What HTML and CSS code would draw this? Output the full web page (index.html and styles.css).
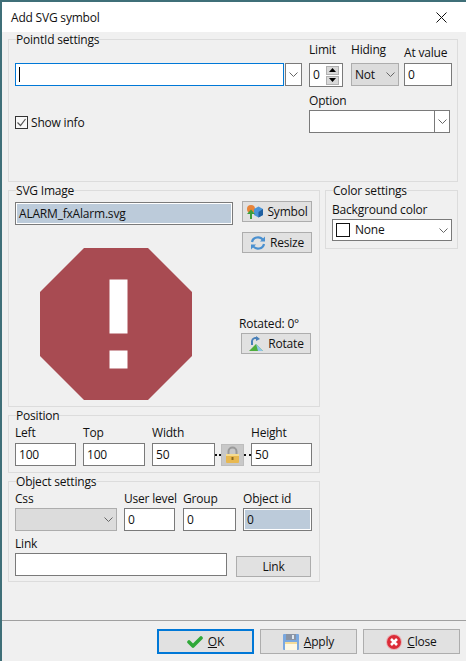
FILE: index.html
```html
<!doctype html>
<html>
<head>
<meta charset="utf-8">
<title>Add SVG symbol</title>
<link rel="stylesheet" href="styles.css">
</head>
<body>
<div class="dialog">

<div class="titlebar">
<span>Add SVG symbol</span>
<svg class="close-x" width="11" height="11" viewBox="0 0 11 11"><path d="M.5.5l10 10M10.500.5l-10 10" stroke="#111" fill="none"/></svg>
</div>

<div class="content">

<fieldset class="panel point-panel">
<legend>PointId settings</legend>
<div class="point-grid">
<div class="point-left">
<div class="point-combo">
<div class="box focus"><i class="caret"></i></div>
<div class="box drop"><svg class="chev" width="9" height="5" viewBox="0 0 9 5"><path d="M.5.500l4 4 4-4"/></svg></div>
</div>
<label class="check-row">
<span class="check"><svg width="11" height="11" viewBox="0 0 11 11"><path d="M1.500 5.500l3 3 5-6.500" stroke="#555" fill="none" stroke-width="1.200"/></svg></span>
Show info
</label>
</div>
<div class="point-right">
<div class="point-top">
<div class="field w-limit">
<span class="lbl">Limit</span>
<div class="box spin">0
<span class="spin-btns">
<b><svg width="7" height="4" viewBox="0 0 7 4"><path d="M3.500 0L7 4H0z"/></svg></b>
<b><svg width="7" height="4" viewBox="0 0 7 4"><path d="M0 0h7L3.500 4z"/></svg></b>
</span>
</div>
</div>
<div class="field w-hiding">
<span class="lbl">Hiding</span>
<div class="box disabled">Not<svg class="chev" width="9" height="5" viewBox="0 0 9 5"><path d="M.5.500l4 4 4-4"/></svg></div>
</div>
<div class="field w-atvalue">
<span class="lbl low">At value</span>
<div class="box">0</div>
</div>
</div>
<div class="field w-option">
<span class="lbl">Option</span>
<div class="box option-box"><span class="option-drop"><svg class="chev" width="9" height="5" viewBox="0 0 9 5"><path d="M.5.500l4 4 4-4"/></svg></span></div>
</div>
</div>
</div>
</fieldset>

<div class="middle">
<div class="left-col">

<fieldset class="panel image-panel">
<legend>SVG Image</legend>
<div class="image-grid">
<div class="image-left">
<div class="box readonly file-box">ALARM_fxAlarm.svg</div>
<svg class="alarm" width="152" height="152" viewBox="0 0 152 152">
<path d="M44 0H108L152 44V108L108 152H44L0 108V44z" fill="#a84b52"/>
<rect x="69.500" y="31.500" width="18" height="54" fill="#fff"/>
<rect x="69.500" y="102.500" width="18" height="18" fill="#fff"/>
</svg>
</div>
<div class="image-right">
<div class="btn btn-symbol">
<svg width="17" height="16" viewBox="0 0 17 16"><circle cx="5" cy="5" r="4" fill="#e8843a"/><path d="M8 5l4.500-2.500L17 5v6l-4.500 2.500L8 11z" fill="#4a94d8"/><path d="M12.500 8L17 5v6l-4.500 2.500z" fill="#1f5fa0"/><path d="M4 15V10H1L5 5.500 9 10H6V15z" fill="#3c9e3c"/></svg>
Symbol
</div>
<div class="btn btn-resize">
<svg width="16" height="16" viewBox="0 0 16 16" fill="none" stroke="#4a90d0" stroke-width="2.200"><path d="M2 7a6 5.500 0 0 1 11-2"/><path d="M14 9a6 5.500 0 0 1-11 2"/><path d="M15 1.500v5h-5z" fill="#4a90d0" stroke="none"/><path d="M1 14.500v-5h5z" fill="#4a90d0" stroke="none"/></svg>
Resize
</div>
<div class="rotated">Rotated: 0°</div>
<div class="btn btn-rotate">
<svg width="16" height="16" viewBox="0 0 16 16"><path d="M1 15l7-7 7 7z" fill="#4fae3c"/><path d="M8 8l7 7H10z" fill="#8fc4e8"/><path d="M4 9V5a3.500 3.500 0 0 1 6-2" fill="none" stroke="#4a80b8" stroke-width="2"/><path d="M8 0l4 3-4 2z" fill="#4a80b8"/></svg>
Rotate
</div>
</div>
</div>
</fieldset>

<fieldset class="panel position-panel">
<legend>Position</legend>
<div class="position-row">
<div class="field w-left"><span class="lbl">Left</span><div class="box">100</div></div>
<div class="field w-top"><span class="lbl">Top</span><div class="box">100</div></div>
<div class="field w-width"><span class="lbl">Width</span><div class="box">50</div></div>
<div class="link-lock">
<i class="dots dots-a"></i>
<span class="lock">
<svg width="13" height="17" viewBox="0 0 13 17"><path d="M2.500 9V5.500a4 4 0 0 1 8 0V9" fill="none" stroke="#9a9a9a" stroke-width="2"/><rect y="8" width="13" height="9" rx="1" fill="#e8b850"/><rect y="8" width="13" height="2" fill="#f6dc90"/><rect x="5.500" y="11" width="2" height="3" fill="#8a6a20"/></svg>
</span>
<i class="dots dots-b"></i>
</div>
<div class="field w-height"><span class="lbl">Height</span><div class="box">50</div></div>
</div>
</fieldset>

<fieldset class="panel object-panel">
<legend>Object settings</legend>
<div class="object-row">
<div class="field w-css"><span class="lbl">Css</span><div class="box disabled"><svg class="chev" width="9" height="5" viewBox="0 0 9 5"><path d="M.5.500l4 4 4-4"/></svg></div></div>
<div class="field w-level"><span class="lbl">User level</span><div class="box">0</div></div>
<div class="field w-group"><span class="lbl">Group</span><div class="box">0</div></div>
<div class="field w-id"><span class="lbl">Object id</span><div class="box readonly">0</div></div>
</div>
<div class="link-row">
<div class="field w-link"><span class="lbl">Link</span><div class="box"></div></div>
<div class="btn btn-link">Link</div>
</div>
</fieldset>

</div>

<fieldset class="panel color-panel">
<legend>Color settings</legend>
<span class="lbl">Background color</span>
<div class="box color-box"><i class="swatch"></i>None<svg class="chev" width="9" height="5" viewBox="0 0 9 5"><path d="M.5.500l4 4 4-4"/></svg></div>
</fieldset>
</div>

</div>

<div class="footer">
<div class="btn foot-btn btn-ok">
<svg width="16" height="12" viewBox="0 0 16 12"><path d="M2 6l4 4 8-8" fill="none" stroke="#2fa838" stroke-width="3.600" stroke-linecap="round" stroke-linejoin="round"/></svg>
<span><u>O</u>K</span>
</div>
<div class="btn foot-btn">
<svg width="16" height="16" viewBox="0 0 16 16"><rect width="16" height="16" rx="1" fill="#79a8e0"/><rect x="3" width="10" height="6" fill="#8a94a4"/><rect x="9" y="1" width="2" height="4" fill="#dfe7f0"/><rect x="2" y="8" width="12" height="8" fill="#fdf8e4"/><rect x="2" y="8" width="12" height="2" fill="#f4dc9a"/></svg>
<span><u>A</u>pply</span>
</div>
<div class="btn foot-btn">
<svg width="16" height="16" viewBox="0 0 16 16"><circle cx="8" cy="8" r="8" fill="#e8b0b4"/><circle cx="8" cy="8" r="7" fill="#dc2c38"/><path d="M5 5l6 6M11 5l-6 6" stroke="#fff" stroke-width="2.600"/></svg>
<span><u>C</u>lose</span>
</div>
</div>

</div>
</body>
</html>
```

FILE: styles.css
```css
*{
box-sizing:border-box;
}
html,body{
margin:0;
padding:0;
}
body{
width:466px;
height:661px;
overflow:hidden;
color:#111;
background:#f0f0f0;
font-family:"Open Sans",sans-serif;
font-size:12px;
line-height:15px;
letter-spacing:-0.2px;
}
.dialog{
width:466px;
height:661px;
border-top:2px solid #3f6f78;
border-left:2px solid #3f6f78;
display:flex;
flex-direction:column;
}
.titlebar{
height:30px;
flex:none;
background:#fff;
padding:0 9px;
display:flex;
align-items:center;
justify-content:space-between;
}
.close-x{
margin-right:10px;
}
.content{
flex:1;
padding:0 6px;
}

/* panels */
.panel{
margin:0;
padding:0 6px;
border:1px solid #dcdcdc;
min-width:0;
}
.panel legend{
padding:0;
margin-left:1px;
height:15px;
}
.point-panel{
width:450px;
height:150px;
padding-right:5px;
}
.middle{
display:flex;
align-items:flex-start;
gap:5px;
margin-top:1px;
}
.left-col{
width:312px;
}
.image-panel{
height:224px;
}
.position-panel{
height:65px;
margin-top:1px;
}
.object-panel{
height:108px;
margin-top:1px;
}
.color-panel{
width:133px;
height:66px;
}

/* controls */
.box{
height:23px;
border:1px solid #7a7a7a;
background:#fff;
padding:0 3px;
line-height:20px;
display:flex;
align-items:center;
}
.box.disabled{
background:#dcdcdc;
border-color:#adadad;
}
.box.readonly{
background:#bccbda;
box-shadow:inset 0 0 0 1px #fff;
}
.field{
flex:none;
}
.lbl{
display:block;
height:15px;
white-space:nowrap;
margin-bottom:2px;
}
.chev{
fill:none;
stroke:#666;
margin-left:auto;
}
.btn{
display:flex;
align-items:center;
justify-content:center;
gap:4px;
height:21px;
background:#e1e1e1;
border:1px solid #adadad;
}

/* point settings */
.point-grid{
display:flex;
justify-content:space-between;
}
.point-left{
width:287px;
padding-top:16px;
}
.point-combo{
display:flex;
gap:1px;
}
.focus{
width:269px;
border-color:#0078d7;
}
.caret{
width:1px;
height:15px;
background:#000;
}
.drop{
width:17px;
padding:0 3px;
}
.check-row{
display:flex;
align-items:center;
gap:3px;
margin-top:29px;
}
.check{
width:13px;
height:13px;
border:1px solid #333;
background:#f8f8f8;
display:flex;
align-items:center;
justify-content:center;
}
.point-right{
width:143px;
}
.point-top{
display:flex;
height:51px;
margin-top:-5px;
}
.point-top .lbl{
margin-bottom:6px;
}
.point-top .low{
margin-top:3px;
margin-bottom:3px;
}
.w-limit{
width:34px;
margin-right:8px;
}
.spin{
height:24px;
justify-content:space-between;
padding:0 3px;
}
.spin-btns{
display:flex;
flex-direction:column;
gap:1px;
}
.spin-btns b{
width:13px;
height:9px;
background:#d8d8d8;
border:1px solid #b0b0b0;
display:flex;
align-items:center;
justify-content:center;
}
.w-hiding{
width:48px;
margin-right:5px;
}
.w-atvalue{
width:48px;
}
.w-option{
width:141px;
}
.option-box{
padding:0;
justify-content:flex-end;
}
.option-drop{
width:15px;
height:100%;
border-left:1px solid #7a7a7a;
display:flex;
align-items:center;
justify-content:center;
}
.option-drop .chev{
margin:0;
}

/* image */
.image-grid{
display:flex;
margin-top:4px;
}
.image-left{
width:218px;
flex:none;
}
.alarm{
display:block;
margin:23px 0 0 25px;
}
.image-right{
flex:1;
padding-left:8px;
}
.btn-symbol{
width:70px;
margin-left:1px;
margin-top:-1px;
}
.btn-resize{
width:70px;
margin-left:1px;
margin-top:10px;
}
.rotated{
margin-top:63px;
margin-left:-2px;
}
.btn-rotate{
width:70px;
margin-top:2px;
}

/* position */
.position-row{
display:flex;
align-items:flex-end;
margin-top:2px;
}
.position-row .lbl{
margin-bottom:3px;
}
.w-left{
width:61px;
margin-right:7px;
}
.w-top{
width:62px;
margin-right:7px;
}
.w-width{
width:63px;
}
.link-lock{
width:36px;
height:23px;
display:flex;
align-items:center;
}
.dots{
flex:none;
height:0;
border-top:2px dotted #111;
}
.dots-a{
width:6px;
}
.dots-b{
width:7px;
}
.lock{
width:23px;
height:22px;
background:#c8c8c8;
border:1px solid #bdbdbd;
display:flex;
align-items:center;
justify-content:center;
}
.w-height{
width:61px;
}

/* object */
.object-row{
display:flex;
margin-top:2px;
}
.w-css{
width:102px;
margin-right:7px;
}
.w-level{
width:51px;
margin-right:8px;
}
.w-group{
width:53px;
margin-right:7px;
}
.w-id{
width:69px;
}
.link-row{
display:flex;
align-items:flex-end;
justify-content:space-between;
margin-top:5px;
}
.w-link{
width:212px;
}
.btn-link{
width:75px;
margin-right:2px;
margin-bottom:-1px;
}

/* color */
.color-panel .lbl{
margin-top:4px;
margin-bottom:2px;
}
.color-box{
height:22px;
width:120px;
}
.swatch{
width:14px;
height:14px;
border:1px solid #111;
margin-right:5px;
}

/* footer */
.footer{
height:39px;
flex:none;
border-top:1px solid #a0a0a0;
padding:8px 6px 0 0;
display:flex;
justify-content:flex-end;
gap:6px;
margin-bottom:2px;
}
.foot-btn{
width:97px;
height:25px;
gap:5px;
}
.btn-ok{
border:2px solid #0078d7;
}
```
